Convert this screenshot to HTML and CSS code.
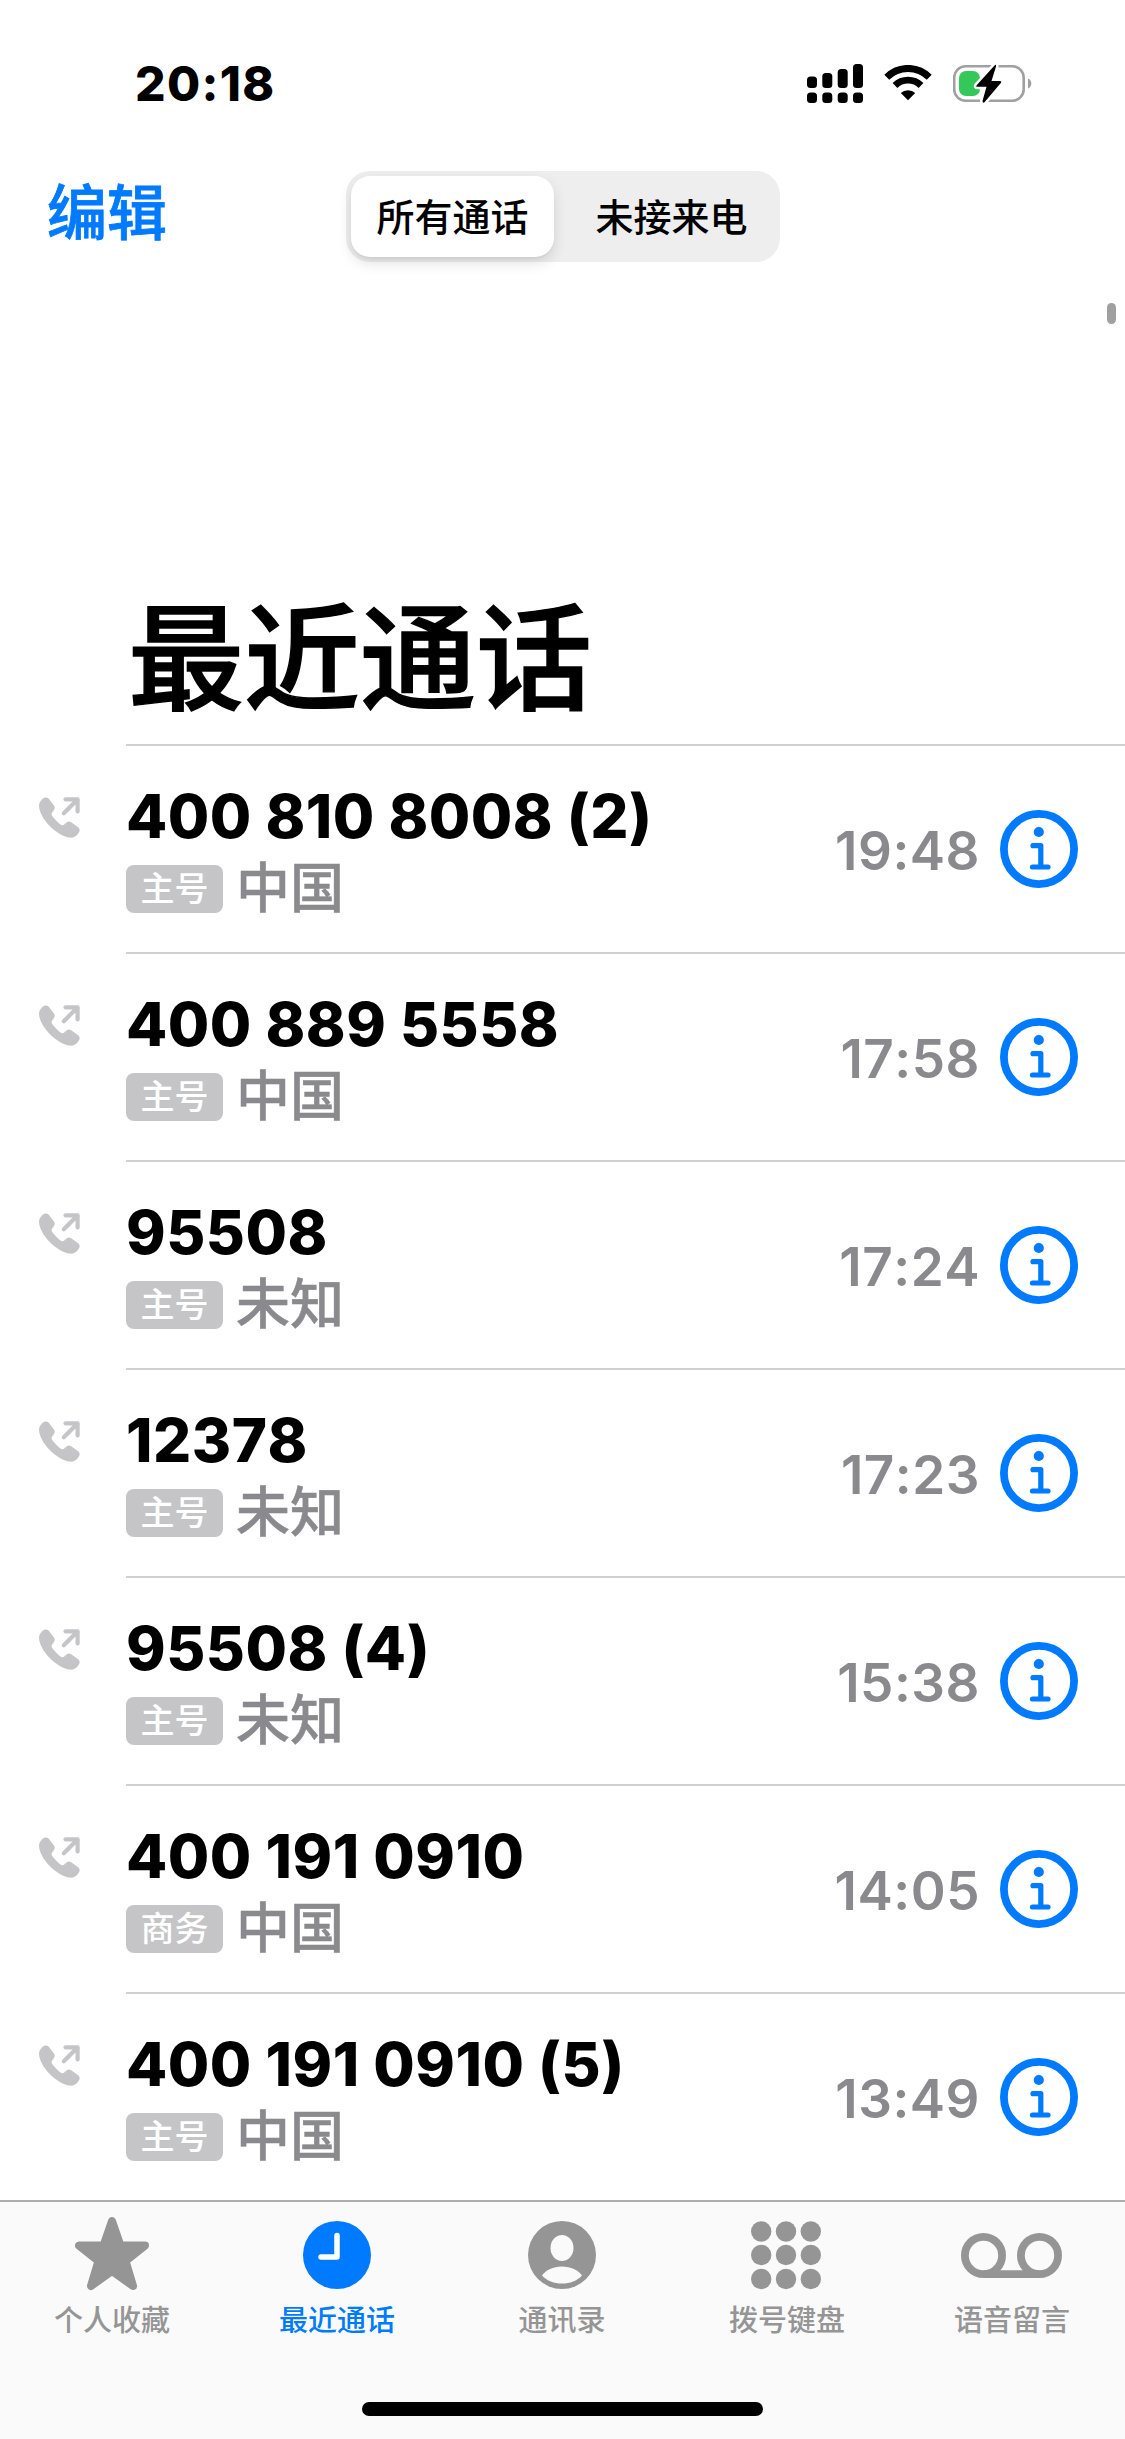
FILE: index.html
```
<!DOCTYPE html>
<html lang="zh-CN">
  <head>
    <meta charset="utf-8">
    <title>最近通话</title>
    <link rel="stylesheet" href="styles.css">
  </head>
<body>

<!-- общие иконки -->
<svg class="sprite" width="0" height="0">
  <symbol id="outgoing" viewBox="0 0 41 41">
    <path d="M3.2 2.2C5 .3 8 0 9.800 1.700L14.800 8.300C16.200 10.200 16 11.800 14.600 13.600L13 15.700C12.200 16.800 12.500 17.700 13.300 19C15.200 22 18.500 25.400 21.900 27.700C23.200 28.500 24.200 28.500 25.200 27.600L27.300 25.700C28.700 24.400 30.500 24.200 32.200 25.300L38.800 29.900C41.300 31.600 41.100 34 39.100 36.700C36.800 39.700 34 41 30.600 40.600C24.400 39.800 16.500 34.700 10.700 28.900C4.900 23.100 .7 15.900 .1 10C-.2 6.700 .900 4.200 3.200 2.200Z" fill="#c5c5c7"/>
    <path d="M26.500 2.300H38.600V14.400M38 3L24.800 16.200" fill="none" stroke="#c5c5c7" stroke-width="4.200" stroke-linecap="round" stroke-linejoin="round"/>
  </symbol>
  <symbol id="info" viewBox="0 0 78 78">
    <circle cx="39" cy="39" r="35.100" fill="none" stroke="#007aff" stroke-width="7.800"/>
    <circle cx="38.800" cy="22" r="5.100" fill="#007aff"/>
    <path d="M33 35.700H40.800V57M32.500 57H48" fill="none" stroke="#007aff" stroke-width="5.200" stroke-linecap="round" stroke-linejoin="round"/>
  </symbol>
</svg>

<header>
  <div class="status">
    <span class="clock">20:18</span>
    <svg class="signal" width="57" height="40" viewBox="0 0 57 40">
      <rect x="0" y="12.500" width="10" height="11.500" rx="3.500"/>
      <rect x="15.300" y="9" width="10" height="15" rx="3.500"/>
      <rect x="30.700" y="5" width="10" height="19" rx="3.500"/>
      <rect x="46" y="0" width="10" height="24" rx="3.500"/>
      <rect x="0" y="28.500" width="10" height="10.500" rx="3.500"/>
      <rect x="15.300" y="28.500" width="10" height="10.500" rx="3.500"/>
      <rect x="30.700" y="28.500" width="10" height="10.500" rx="3.500"/>
      <rect x="46" y="28.500" width="10" height="10.500" rx="3.500"/>
    </svg>
    <svg class="wifi" width="48" height="36" viewBox="0 0 48 36">
      <path d="M2.800 12.200A30 30 0 0 1 45.200 12.200" fill="none" stroke="#000" stroke-width="7"/>
      <path d="M11 20.500A18.500 18.500 0 0 1 37 20.500" fill="none" stroke="#000" stroke-width="6.800"/>
      <path d="M24 35.300L16.800 28.100A10.500 10.500 0 0 1 31.200 28.100Z"/>
    </svg>
    <svg class="battery" width="80" height="40" viewBox="0 0 80 40">
      <rect x="1.200" y="2.200" width="69.500" height="34.600" rx="11.500" fill="none" stroke="#a0a0a0" stroke-width="2.600"/>
      <path d="M75 14.500C79.400 16 79.400 23 75 24.500Z" fill="#a0a0a0"/>
      <rect x="6" y="7" width="21" height="25" rx="7" fill="#34c759"/>
      <path d="M42 1L23.600 21.200Q22.500 22.800 24.500 22.800H33.500L29.500 37Q29.600 39.600 31.500 38.300L48 18.800Q49 16.900 46.800 16.900H38.500L43 2.500Q43.400 .2 42 1Z" stroke="#fff" stroke-width="5" paint-order="stroke"/>
    </svg>
  </div>
  <div class="nav">
    <a class="edit">编辑</a>
    <div class="segment">
      <span class="active">所有通话</span>
      <span>未接来电</span>
    </div>
  </div>
</header>

<div class="scroll"></div>

<h1>最近通话</h1>

<ul class="calls">
  <li>
    <svg class="out"><use href="#outgoing"/></svg>
    <div class="row">
      <div class="who"><b>400 810 8008 (2)</b><p><i>主号</i>中国</p></div>
      <time>19:48</time>
      <svg class="info"><use href="#info"/></svg>
    </div>
  </li>
  <li>
    <svg class="out"><use href="#outgoing"/></svg>
    <div class="row">
      <div class="who"><b>400 889 5558</b><p><i>主号</i>中国</p></div>
      <time>17:58</time>
      <svg class="info"><use href="#info"/></svg>
    </div>
  </li>
  <li>
    <svg class="out"><use href="#outgoing"/></svg>
    <div class="row">
      <div class="who"><b>95508</b><p><i>主号</i>未知</p></div>
      <time>17:24</time>
      <svg class="info"><use href="#info"/></svg>
    </div>
  </li>
  <li>
    <svg class="out"><use href="#outgoing"/></svg>
    <div class="row">
      <div class="who"><b>12378</b><p><i>主号</i>未知</p></div>
      <time>17:23</time>
      <svg class="info"><use href="#info"/></svg>
    </div>
  </li>
  <li>
    <svg class="out"><use href="#outgoing"/></svg>
    <div class="row">
      <div class="who"><b>95508 (4)</b><p><i>主号</i>未知</p></div>
      <time>15:38</time>
      <svg class="info"><use href="#info"/></svg>
    </div>
  </li>
  <li>
    <svg class="out"><use href="#outgoing"/></svg>
    <div class="row">
      <div class="who"><b>400 191 0910</b><p><i>商务</i>中国</p></div>
      <time>14:05</time>
      <svg class="info"><use href="#info"/></svg>
    </div>
  </li>
  <li>
    <svg class="out"><use href="#outgoing"/></svg>
    <div class="row">
      <div class="who"><b>400 191 0910 (5)</b><p><i>主号</i>中国</p></div>
      <time>13:49</time>
      <svg class="info"><use href="#info"/></svg>
    </div>
  </li>
</ul>

<footer>
  <div class="tabs">
    <a>
      <svg width="74" height="80" viewBox="0 0 74 80">
        <path d="M37 7L45.500 31.500H70L50.500 47L58 72L37 57L16 72L23.500 47L4 31.500H28.500Z" fill="#959595" stroke="#959595" stroke-width="8" stroke-linejoin="round"/>
      </svg>
      个人收藏
    </a>
    <a class="active">
      <svg width="68" height="80" viewBox="0 0 68 80">
        <circle cx="34" cy="41" r="34" fill="#007aff"/>
        <path d="M34 21.500V43H18" fill="none" stroke="#fff" stroke-width="5.500" stroke-linecap="round" stroke-linejoin="round"/>
      </svg>
      最近通话
    </a>
    <a>
      <svg width="68" height="80" viewBox="0 0 68 80">
        <circle cx="34" cy="41" r="34" fill="#959595"/>
        <ellipse cx="34" cy="34" rx="11.500" ry="13" fill="#fafafa"/>
        <path d="M14 61.500C18 56 25 52.500 34 52.500C43 52.500 50 56 54 61.500C49 67 42 69.500 34 69.500C26 69.500 19 67 14 61.500Z" fill="#fafafa"/>
      </svg>
      通讯录
    </a>
    <a>
      <svg width="72" height="80" viewBox="0 0 72 80" fill="#959595">
        <circle cx="10.200" cy="17.500" r="10.200"/><circle cx="35" cy="17.500" r="10.200"/><circle cx="59.800" cy="17.500" r="10.200"/>
        <circle cx="10.200" cy="41" r="10.200"/><circle cx="35" cy="41" r="10.200"/><circle cx="59.800" cy="41" r="10.200"/>
        <circle cx="10.200" cy="65" r="10.200"/><circle cx="35" cy="65" r="10.200"/><circle cx="59.800" cy="65" r="10.200"/>
      </svg>
      拨号键盘
    </a>
    <a>
      <svg width="102" height="80" viewBox="0 0 102 80" fill="none" stroke="#959595" stroke-width="7.800">
        <circle cx="22.500" cy="41.500" r="18.600"/>
        <circle cx="78.500" cy="41.500" r="18.600"/>
        <path d="M22.500 60.100H78.500"/>
      </svg>
      语音留言
    </a>
  </div>
  <div class="home"></div>
</footer>

</body></html>
```
FILE: styles.css
```
body {
  margin: 0;
  height: 2439px;
  overflow: hidden;
  display: flex;
  flex-direction: column;
  background: #fff;
  color: #000;
  font-family: Inter, "Noto Sans CJK SC", sans-serif;
  font-kerning: none;
}

svg {
  display: block;
  flex: none;
}

.sprite {
  position: absolute;
}

header {
  height: 300px;
  flex: none;
}

.status {
  display: flex;
  align-items: flex-start;
  height: 171px;
}

.clock {
  width: 672px;
  padding: 54px 0 0 135px;
  font-size: 48px;
  line-height: 60px;
  font-weight: 800;
  letter-spacing: 1.3px;
}

.signal {
  margin-top: 64px;
}

.wifi {
  margin: 65px 0 0 20px;
}

.battery {
  margin: 64px 0 0 21px;
}

.nav {
  display: flex;
}

.edit {
  width: 299px;
  padding-left: 47px;
  font-size: 60px;
  line-height: 84px;
  font-weight: 500;
  -webkit-text-stroke: 0.8px;
  color: #007aff;
}

.segment {
  display: flex;
  box-sizing: border-box;
  width: 434px;
  height: 91px;
  padding: 5px;
  border-radius: 24px;
  background: #eeeeef;
}

.segment span {
  flex: 1;
  margin: 0 0 0 14px;
  font-size: 38px;
  line-height: 82px;
  font-weight: 500;
  text-align: center;
}

.segment .active {
  flex: none;
  width: 203px;
  margin: 0;
  height: 81px;
  border-radius: 19px;
  background: #fff;
  box-shadow: 0 6px 14px rgba(0, 0, 0, 0.12), 0 2px 2px rgba(0, 0, 0, 0.04);
}

.scroll {
  align-self: flex-end;
  flex: none;
  width: 9px;
  height: 21px;
  margin: 3px 9px 0 0;
  border-radius: 5px;
  background: #a0a0a0;
}

h1 {
  flex: none;
  margin: 248px 0 0 128px;
  height: 172px;
  font-size: 116px;
  line-height: 175px;
  font-weight: 500;
  -webkit-text-stroke: 1.4px;
}

.calls {
  flex: none;
  list-style: none;
  margin: 0;
  padding: 0;
  height: 1456px;
}

.calls li {
  display: flex;
  height: 208px;
}

.out {
  width: 41px;
  height: 41px;
  margin: 53px 46px 0 39px;
}

.row {
  flex: 1;
  display: flex;
  box-sizing: border-box;
  border-top: 2px solid #d0d0d2;
}

.who {
  flex: 1;
}

b {
  display: block;
  margin-top: 34px;
  font-size: 60px;
  line-height: 72px;
  font-weight: 800;
  letter-spacing: 0.5px;
  white-space: nowrap;
}

p {
  display: flex;
  align-items: center;
  margin: 6px 0 0;
  font-size: 54px;
  line-height: 62px;
  font-weight: 500;
  -webkit-text-stroke: 0.5px;
  color: #8a8a8e;
}

i {
  width: 97px;
  height: 48px;
  margin-right: 13px;
  border-radius: 8px;
  background: #c5c5c7;
  color: #fff;
  font-size: 34px;
  line-height: 48px;
  font-style: normal;
  text-align: center;
  -webkit-text-stroke: 0;
}

time {
  margin-top: 73px;
  font-size: 53px;
  line-height: 64px;
  font-weight: 600;
  letter-spacing: 0.5px;
  color: #8a8a8e;
}

.info {
  width: 78px;
  height: 78px;
  margin: 64px 47px 0 20px;
}

footer {
  flex: none;
  height: 239px;
  box-sizing: border-box;
  border-top: 2px solid #adadad;
  background: #fafafa;
}

.tabs {
  display: flex;
  height: 200px;
}

.tabs a {
  flex: 1;
  display: flex;
  flex-direction: column;
  align-items: center;
  padding: 12px 1px 0 0;
  font-size: 29px;
  line-height: 46px;
  font-weight: 500;
  color: #959595;
}

.tabs svg {
  margin-bottom: 4px;
}

.tabs .active {
  color: #007aff;
}

.home {
  width: 401px;
  height: 14px;
  margin: 0 auto;
  border-radius: 7px;
  background: #000;
}
```
